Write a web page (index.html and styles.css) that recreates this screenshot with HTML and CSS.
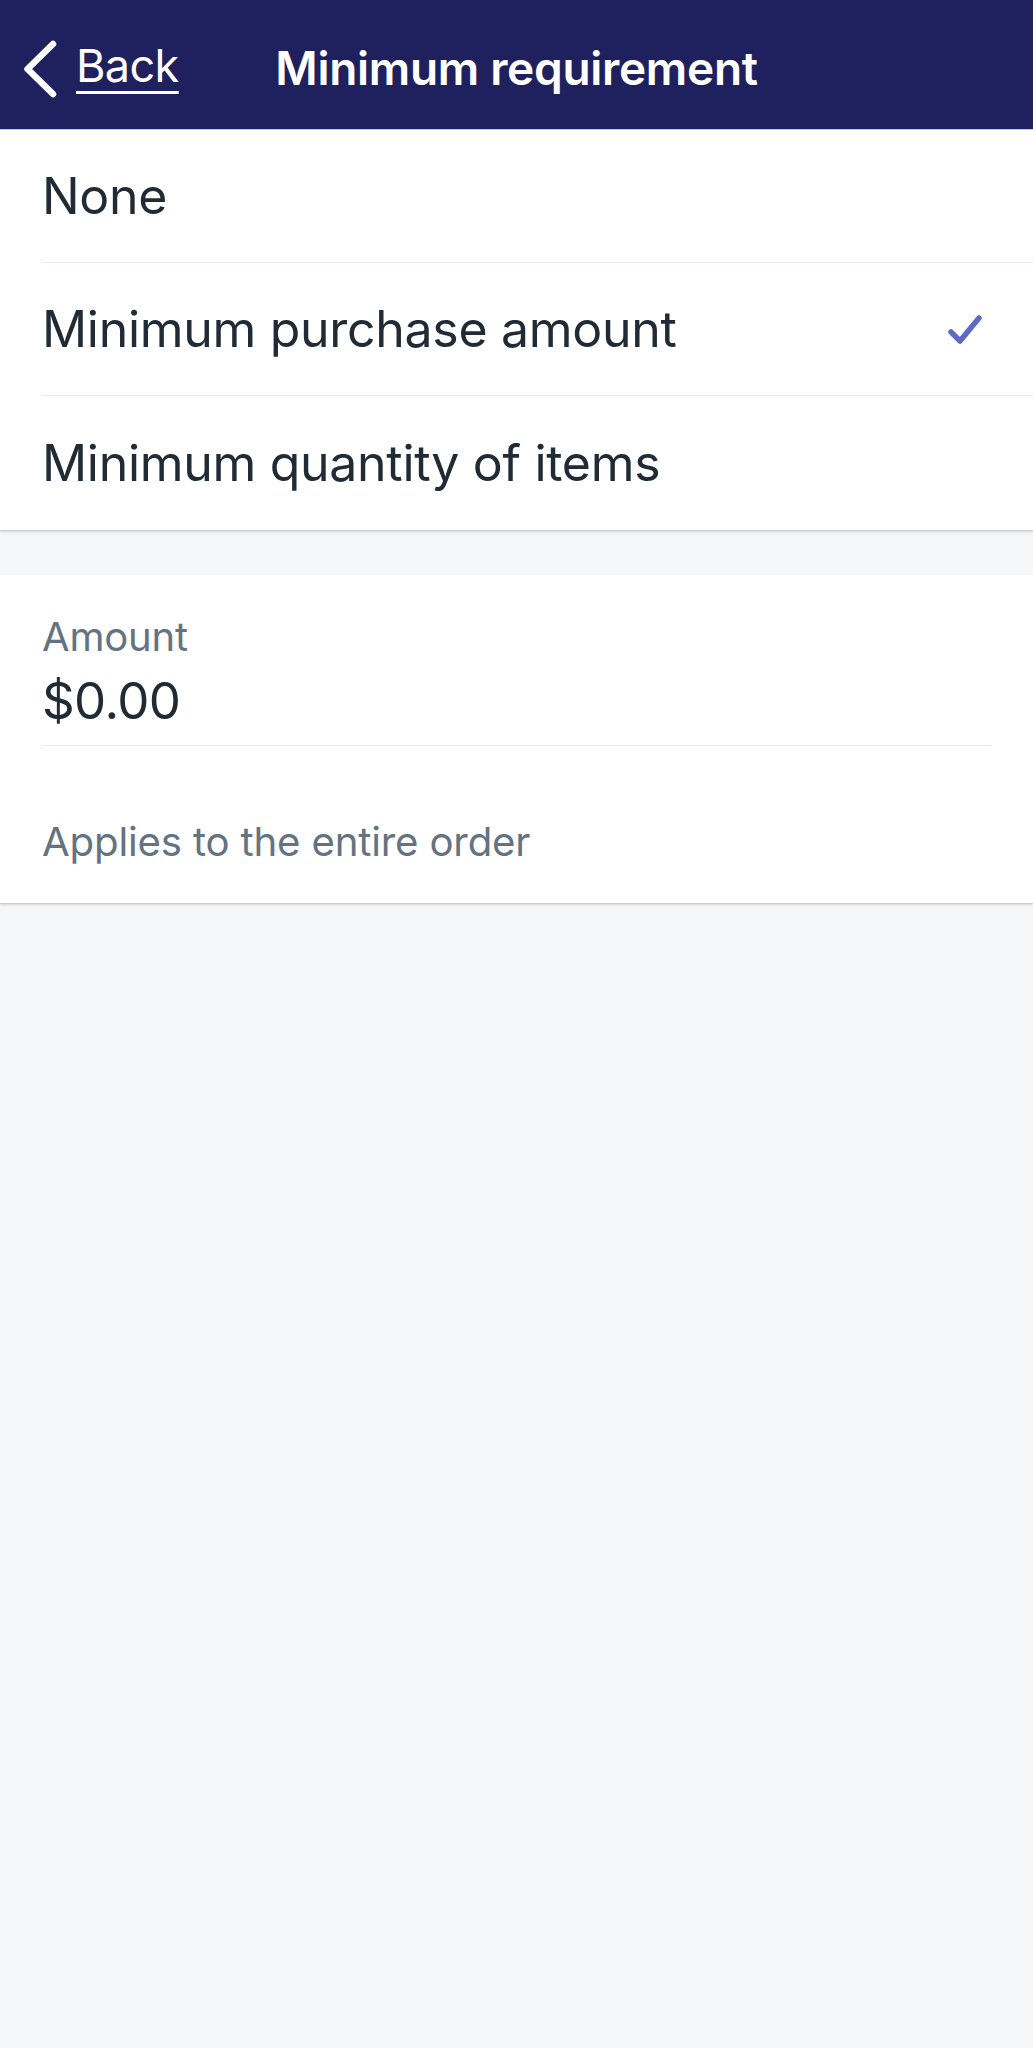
FILE: index.html
```html
<!DOCTYPE html>
<html lang="en">
<head>
<meta charset="utf-8">
<title>Minimum requirement</title>
<link rel="stylesheet" href="styles.css">
</head>
<body>
<header class="nav">
  <a class="back" href="#">
    <svg class="chevron" width="40" height="60" viewBox="0 0 40 60" aria-hidden="true">
      <polyline points="33,6 7.5,31 33,56" fill="none" stroke="#ffffff" stroke-width="6.5" stroke-linecap="round" stroke-linejoin="round"/>
    </svg>
    <span class="back-label">Back</span>
  </a>
  <h1 class="title">Minimum requirement</h1>
  <span class="nav-spacer"></span>
</header>

<section class="group options">
  <div class="row"><span class="row-label">None</span></div>
  <div class="row"><span class="row-label">Minimum purchase amount</span>
    <svg class="check" width="40" height="34" viewBox="0 0 40 34" aria-hidden="true">
      <polyline points="6,20 15,29 34,6" fill="none" stroke="#5c6ac4" stroke-width="5.5" stroke-linecap="round" stroke-linejoin="round"/>
    </svg>
  </div>
  <div class="row"><span class="row-label">Minimum quantity of items</span></div>
</section>

<section class="group amount">
  <div class="field">
    <label class="field-label">Amount</label>
    <div class="field-value">$0.00</div>
  </div>
  <p class="help">Applies to the entire order</p>
</section>
</body>
</html>
```

FILE: styles.css
```css
html, body {
  margin: 0;
  padding: 0;
}
body {
  background: #f4f6f8;
  min-height: 2048px;
  font-family: Inter, "Noto Sans", "Liberation Sans", sans-serif;
  color: #212b36;
}

.nav {
  height: 130px;
  box-sizing: border-box;
  padding-top: 6px;
  background: #1e215d;
  display: grid;
  grid-template-columns: 1fr auto 1fr;
  align-items: center;
  border-bottom: 1px solid #c4c9e0;
}
.back {
  display: flex;
  align-items: center;
  color: #ffffff;
  text-decoration: none;
  justify-self: start;
  margin-top: -4px;
}
.chevron {
  margin-left: 20px;
  margin-top: 4px;
}
.back-label {
  margin-left: 16px;
  font-size: 45px;
  font-weight: 400;
  letter-spacing: -0.6px;
  text-decoration: underline;
  text-decoration-thickness: 2.5px;
  text-underline-offset: 9px;
}
.title {
  margin: 0;
  color: #ffffff;
  font-size: 46px;
  font-weight: 600;
  letter-spacing: -0.3px;
  white-space: nowrap;
}

.group {
  background: #ffffff;
  box-shadow: 0 2px 2px rgba(99, 115, 129, 0.22), 0 1px 0 rgba(99, 115, 129, 0.12);
}
.options {
  padding-left: 42px;
}
.row {
  height: 133px;
  box-sizing: border-box;
  display: flex;
  align-items: center;
  justify-content: space-between;
  padding-right: 48px;
  border-bottom: 1px solid #e6e9ed;
}
.row:last-child {
  border-bottom: none;
  height: 134px;
}
.row-label {
  font-size: 50px;
  line-height: 60px;
  letter-spacing: -0.3px;
}

.amount {
  margin-top: 45px;
  padding: 37px 42px 36px 42px;
}
.field {
  display: flex;
  flex-direction: column;
  border-bottom: 1px solid #e6e9ed;
  padding-bottom: 14px;
}
.field-label {
  font-size: 40px;
  line-height: 50px;
  color: #637381;
  letter-spacing: -0.2px;
}
.field-value {
  margin-top: 9px;
  font-size: 51px;
  line-height: 60px;
  letter-spacing: -0.6px;
}
.help {
  margin: 71px 0 0 0;
  font-size: 40.2px;
  line-height: 50px;
  color: #637381;
  letter-spacing: -0.18px;
}
```
